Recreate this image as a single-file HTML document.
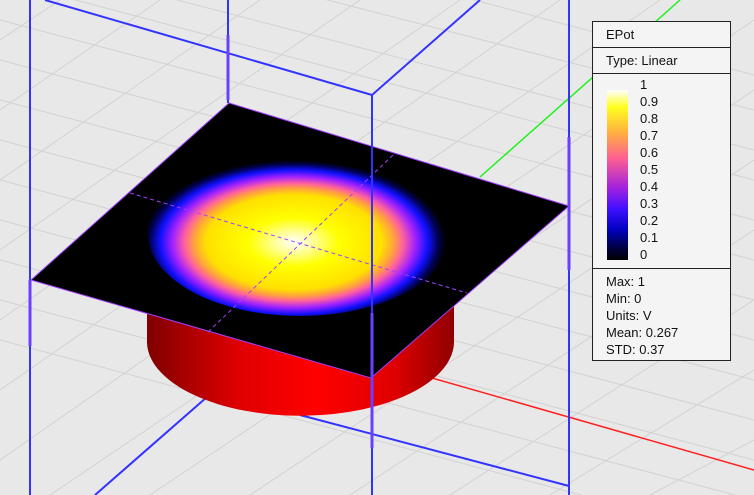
<!DOCTYPE html>
<html><head><style>
body{margin:0;width:754px;height:495px;overflow:hidden;background:#e8e8e8;font-family:"Liberation Sans",sans-serif}
#lg{position:absolute;left:592px;top:21px;width:139px;height:340px;background:#f4f4f4;border:1px solid #222;box-sizing:border-box;font-size:13px;color:#111}
.r{border-bottom:1px solid #222;padding-left:13px}
#cb{position:absolute;left:14px;top:68px;width:21px;height:170px;background:linear-gradient(#fff,#ffff20 10%,#ffb040 25%,#ff6090 40%,#a020e0 58%,#4010ff 70%,#0000c0 82%,#000040 93%,#000)}
.l{position:absolute;left:47px;line-height:14px}
</style></head><body>
<svg width="754" height="495" style="position:absolute;left:0;top:0">
<defs>
<radialGradient id="g" cx="0.48" cy="0.55" r="0.5">
<stop offset="0" stop-color="#fff"/><stop offset="0.12" stop-color="#ffffa0"/><stop offset="0.3" stop-color="#ffff00"/><stop offset="0.58" stop-color="#ffe000"/><stop offset="0.66" stop-color="#ffa040"/><stop offset="0.72" stop-color="#ff60a0"/><stop offset="0.8" stop-color="#a020ff"/><stop offset="0.88" stop-color="#1010ff"/><stop offset="0.95" stop-color="#000050"/><stop offset="1" stop-color="#000"/>
</radialGradient>
<linearGradient id="c" x1="0" x2="1">
<stop offset="0" stop-color="#800000"/><stop offset="0.3" stop-color="#e00000"/><stop offset="0.55" stop-color="#ff0000"/><stop offset="0.8" stop-color="#e00000"/><stop offset="1" stop-color="#900000"/>
</linearGradient>
</defs>
<g stroke="#d2d2d2" stroke-width="1">
<path d="M0 60L754 260M0 100L754 300M0 140L754 340M0 180L754 380M0 220L754 420M0 260L754 460M0 300L754 500M0 340L600 500M0 20L754 220M0 -20L754 180M100 -20L754 150M250 -20L754 110M400 -20L754 75"/>
<path d="M60 0L0 40M160 0L0 110M260 0L0 180M360 0L0 250M460 0L0 320M560 0L0 390M660 0L0 460M754 20L50 495M754 90L150 495M754 160L250 495M754 230L350 495M754 300L450 495M754 370L550 495M754 440L650 495"/>
</g>
<path d="M480 177L680 0" stroke="#20f020" stroke-width="1.5"/>
<path d="M432 378L754 470" stroke="#ff2020" stroke-width="1.5"/>
<g stroke="#3333ff" stroke-width="2" fill="none">
<path d="M30 0V495M228 0V103M569 0V495M45 0L372 95L480 0M95 495L215 390M300 415L569 486"/>
</g>
<path d="M147 313V343A153 74 0 0 0 454 340V300Z" fill="url(#c)"/>
<polygon points="229,103 569,206 371,378 31,280" fill="#000" stroke="#a040ff" stroke-width="1"/>
<ellipse cx="300" cy="234" rx="152" ry="82" fill="url(#g)"/>
<path d="M130 193L467 293M393 155L208 332" stroke="#a040ff" stroke-width="1" stroke-dasharray="4 3"/>
<path d="M372 95V495" stroke="#3333ff" stroke-width="2"/>
<g stroke="#6a40ff" stroke-width="3"><path d="M228 35V100M30 280V346M372 313V448M569 137V270"/></g>
</svg>
<div id="lg">
<div class="r" style="height:25px;line-height:25px">EPot</div>
<div class="r" style="height:25px;line-height:25px">Type: Linear</div>
<div id="cb"></div>
<div class="l" style="top:56px">1</div><div class="l" style="top:73px">0.9</div><div class="l" style="top:90px">0.8</div><div class="l" style="top:107px">0.7</div><div class="l" style="top:124px">0.6</div><div class="l" style="top:141px">0.5</div><div class="l" style="top:158px">0.4</div><div class="l" style="top:175px">0.3</div><div class="l" style="top:192px">0.2</div><div class="l" style="top:209px">0.1</div><div class="l" style="top:226px">0</div>
<div style="position:absolute;top:246px;left:0;right:0;border-top:1px solid #222;padding:4px 0 0 13px;line-height:17px">Max: 1<br>Min: 0<br>Units: V<br>Mean: 0.267<br>STD: 0.37</div>
</div>
</body></html>
